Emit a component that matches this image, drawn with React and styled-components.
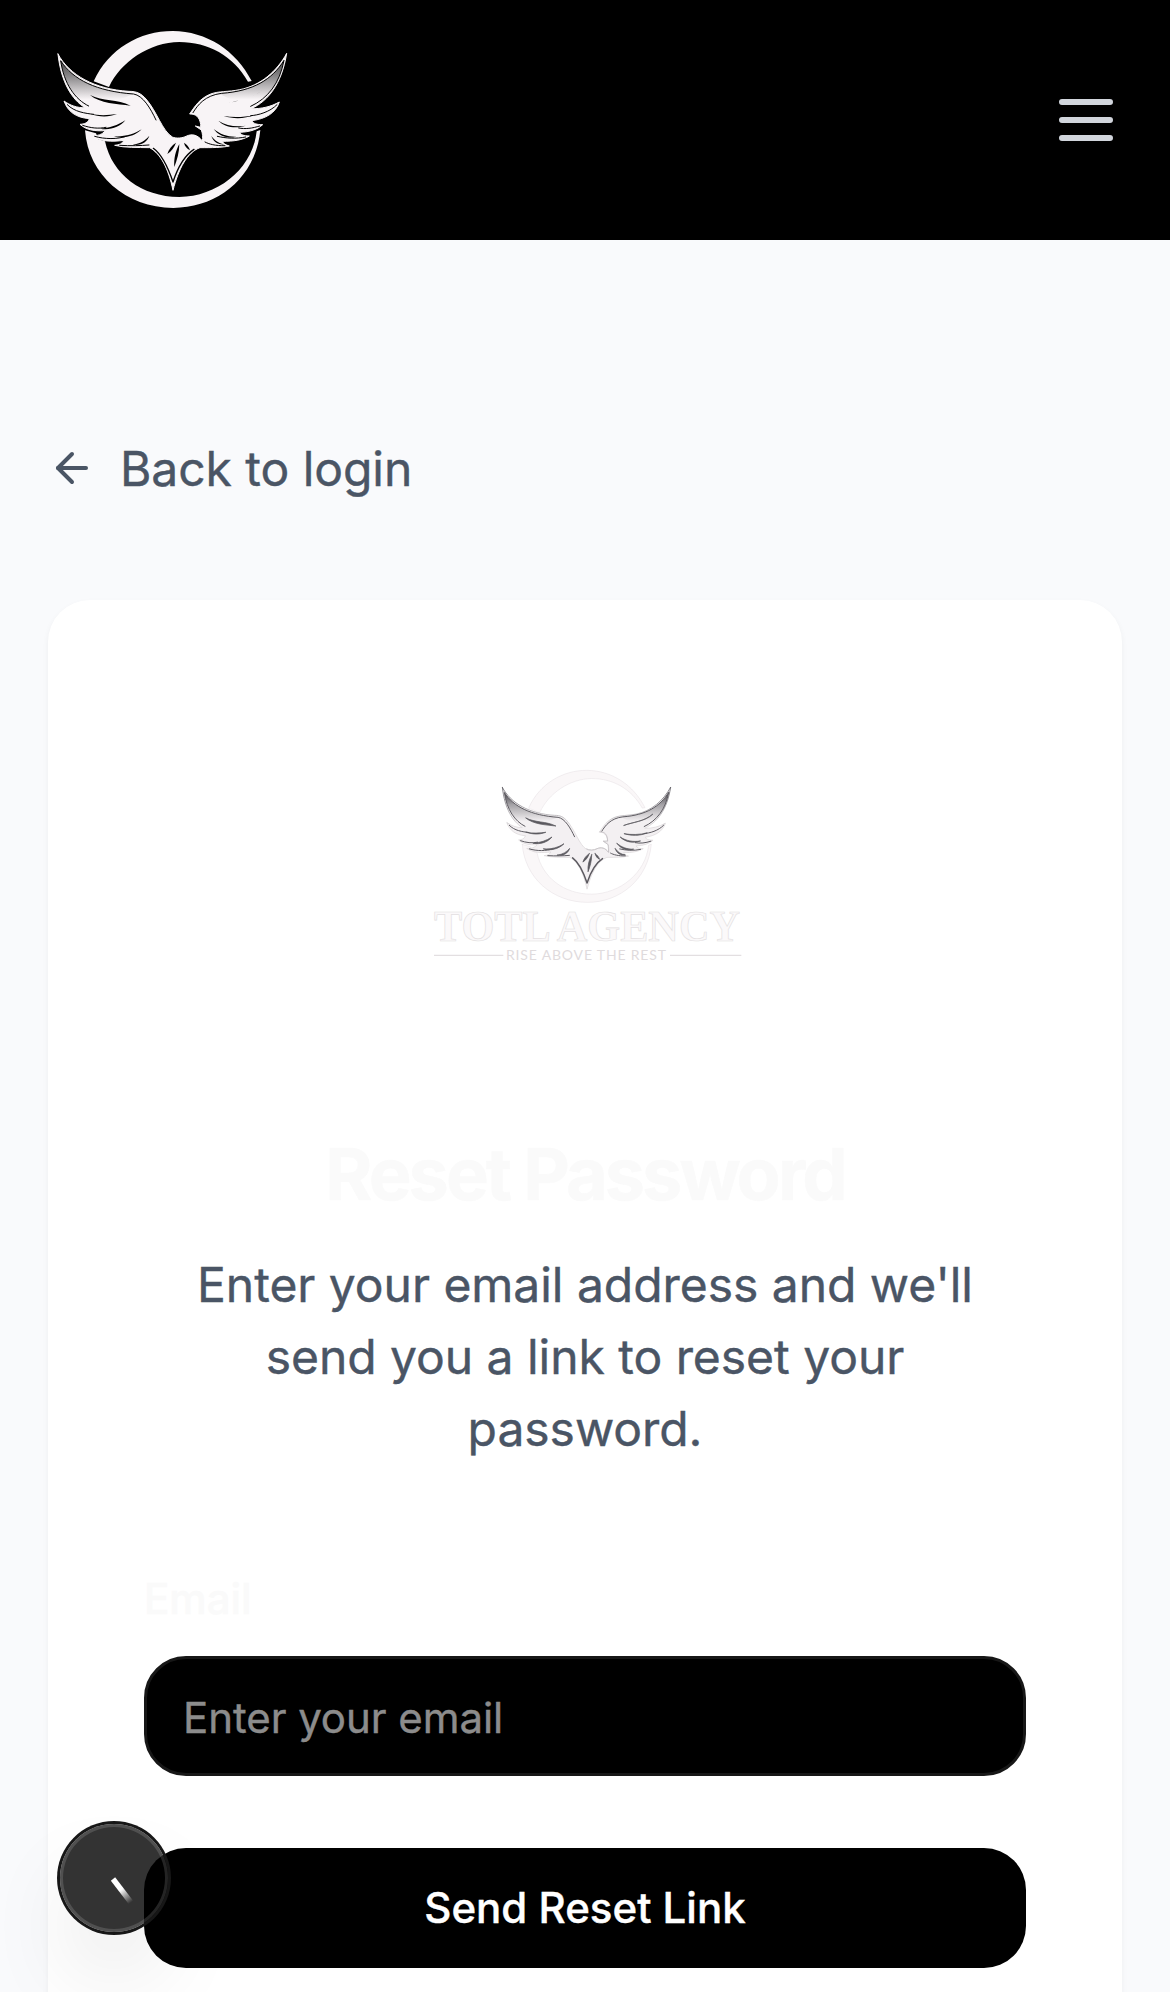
import React from "react";
import styled, { createGlobalStyle } from "styled-components";
import { ArrowLeft } from "lucide-react";

const GlobalStyle = createGlobalStyle`
  *, *::before, *::after { box-sizing: border-box; }
  body {
    margin: 0;
    height: 1992px;
    overflow: hidden;
    background: #f9fafc;
    font-family: Inter, "Liberation Sans", sans-serif;
    -webkit-font-smoothing: antialiased;
    -webkit-text-stroke: 0.4px currentColor;
  }
`;

const Header = styled.header`
  display: flex;
  align-items: center;
  justify-content: space-between;
  height: 240px;
  padding: 0 48px 0 40px;
  background: #000;
`;

const HomeLink = styled.a`
  display: flex;
`;

const MenuButton = styled.button`
  display: flex;
  padding: 0;
  border: 0;
  background: none;
  color: #d1d5dc;
`;

const Main = styled.main`
  padding: 192px 48px 0;
`;

const BackLink = styled.a`
  display: inline-flex;
  align-items: center;
  gap: 24px;
  height: 72px;
  margin-bottom: 96px;
  color: #4a5565;
  font-size: 48px;
  line-height: 72px;
  letter-spacing: -0.06px;
`;

const BackText = styled.span`
  padding-top: 2px;
`;

const Card = styled.section`
  display: flex;
  flex-direction: column;
  padding: 140px 96px 96px;
  border-radius: 42px;
  background: #fff;
  box-shadow: 0 3px 6px rgba(0, 0, 0, 0.05);
`;

const Brand = styled.div`
  display: flex;
  justify-content: center;
  margin-bottom: 158px;
`;

const Title = styled.h1`
  margin: 0 0 39px;
  color: #fafafa;
  font-size: 72px;
  font-weight: 700;
  line-height: 72px;
  letter-spacing: -3px;
  text-align: center;
  -webkit-text-stroke-width: 0.6px;
`;

const Description = styled.p`
  margin: 0 0 113px;
  padding: 0 48px;
  color: #4a5565;
  font-size: 48px;
  line-height: 72px;
  letter-spacing: -0.04px;
  text-align: center;
`;

const Form = styled.form`
  display: flex;
  flex-direction: column;
`;

const Label = styled.label`
  margin-bottom: 36px;
  color: #fafafa;
  font-size: 42px;
  font-weight: 500;
  line-height: 42px;
`;

const Input = styled.input`
  height: 120px;
  margin-bottom: 72px;
  padding: 2px 36px 0;
  border: 3px solid #171717;
  border-radius: 42px;
  background: #000;
  color: #fafafa;
  font: inherit;
  font-size: 42px;
  letter-spacing: -0.06px;
  &::placeholder {
    color: #8c8c8c;
    opacity: 1;
  }
`;

const Submit = styled.button`
  height: 120px;
  padding: 0 0 2px;
  border: 0;
  border-radius: 42px;
  background: #000;
  color: #fff;
  font: inherit;
  font-size: 42px;
  font-weight: 500;
`;

const DevBadge = styled.div`
  position: fixed;
  left: 60px;
  top: 1824px;
  width: 108px;
  height: 108px;
  border-radius: 50%;
  background: rgba(0, 0, 0, 0.8);
  box-shadow:
    0 0 0 3px #171717,
    inset 0 0 0 3px rgba(255, 255, 255, 0.14),
    0 48px 96px -24px rgba(0, 0, 0, 0.24);
`;

const ON_DARK = {
  ink: "#000",
  fill: "#f8f4f6",
  ring: "#f8f4f6",
  ringEdge: "none",
  tip: "#4a494a",
  mid: "#8b898b",
  rim: 3,
};
const ON_LIGHT = {
  ink: "#5b595f",
  fill: "#f3f0f2",
  ring: "#faf7f8",
  ringEdge: "#e4dfe2",
  tip: "#4c4a50",
  mid: "#a3a1a5",
  rim: 4,
};

function Eagle({ id, tone }) {
  const light = tone === ON_LIGHT;
  return (
    <g strokeLinejoin="round" strokeLinecap="round">
      <defs>
        <linearGradient id={id} gradientUnits="userSpaceOnUse" x1="0" y1="155" x2="0" y2="268">
          <stop offset="0" stopColor={tone.tip} />
          <stop offset="0.4" stopColor={tone.mid} />
          <stop offset="1" stopColor={tone.fill} />
        </linearGradient>
        <linearGradient id={`${id}-edge`} gradientUnits="userSpaceOnUse" x1="0" y1="130" x2="0" y2="290">
          <stop offset="0" stopColor={light ? "#55535a" : tone.fill} />
          <stop offset="0.5" stopColor={light ? "#8a888d" : tone.fill} />
          <stop offset="1" stopColor={light ? "#dcd8da" : tone.fill} />
        </linearGradient>
      </defs>
      <path
        fill={tone.ring}
        stroke={tone.ringEdge}
        strokeWidth="2"
        d="M161 214C206 116 299 63 398 63C500 64 588 121 635 213L624 215C580 137 504 96 418 96C329 97 242 155 207 231Z"
      />
      <path
        fill={tone.ring}
        stroke={tone.ringEdge}
        strokeWidth="2"
        d="M135 361L168 370L175 388L195 394C216 493 304 561 418 561C535 559 638 475 650 364L661 360C648 501 534 594 400 594C257 593 145 495 135 361Z"
      />
      {/* silhouette */}
      <path
        fill={tone.fill}
        stroke={`url(#${id}-edge)`}
        strokeWidth="3"
        d="M54 132C63 218 97 270 135 293C112 294 90 286 72 273C83 304 107 323 148 326C144 339 133 342 120 343C139 360 163 364 196 362C187 374 172 378 153 377C182 395 215 396 252 391C247 401 238 405 224 406C256 414 292 412 329 413C362 431 385 475 399 541C415 478 441 427 480 413C516 413 545 413 568 408C557 405 550 401 547 394C583 394 607 390 628 378C611 378 602 374 599 367C630 366 653 358 668 344C650 344 640 341 636 332C678 326 707 309 718 276C693 290 664 297 634 296C684 273 725 223 740 130C711 184 661 227 599 239C565 246 535 243 512 252C480 265 465 288 449 312C468 311 479 322 482 343L482 352L466 348L484 360C488 371 489 383 487 393C473 374 456 371 440 378C427 385 408 386 397 381C366 362 352 306 318 267C303 250 290 244 267 244C165 238 88 196 54 132Z"
      />
      {/* shaded wing tips */}
      <path
        fill={`url(#${id})`}
        d="M62 152C99 209 169 244 281 252C255 262 218 280 148 286C105 268 72 222 62 152ZM732 151C696 209 640 243 535 250C570 268 608 285 636 289C684 265 719 220 732 151Z"
      />
      <g fill="none" stroke={tone.ink} strokeWidth={tone.rim}>
        <path d="M146 288C105 268 72 222 62 152C99 209 169 244 281 252C309 257 331 294 348 330" />
        <path d="M632 289C684 265 719 220 732 151C696 209 640 243 545 250C495 256 473 285 459 308" />
        <path d="M82 284C103 306 136 310 161 313M128 346C151 354 174 357 198 352M164 379C194 388 233 388 258 379M239 406C272 408 302 407 327 405" />
        <path d="M711 284C690 306 654 316 632 317M659 348C637 355 616 358 596 354M617 381C588 387 558 385 532 379M555 407C526 408 506 402 495 396" />
        <path d="M340 415C369 436 385 475 399 516C413 473 434 436 462 418" strokeWidth={light ? 6 : 4} />
      </g>
      {/* feather cuts */}
      <g fill={tone.ink} stroke={tone.ink} strokeWidth={light ? 3 : 0}>
        <path d="M150 255C188 274 232 267 272 287C231 282 181 281 150 255ZM151 312C178 317 206 316 231 312C206 322 177 321 151 312ZM180 356C209 354 233 346 256 331C240 351 208 363 180 356ZM222 379C253 381 282 373 305 358C287 377 250 389 222 379ZM278 404C301 401 316 391 328 377C322 396 303 408 278 404Z" />
        <path d="M666 240C634 269 586 271 548 285C587 270 632 270 666 240ZM551 318C580 323 612 322 644 315C613 327 580 327 551 318ZM535 332C559 347 587 352 617 347C586 357 555 352 535 332ZM521 357C541 373 563 381 589 380C558 388 535 376 521 357ZM514 378C525 393 538 401 555 403C533 406 519 394 514 378Z" />
        <path d="M408 398C395 406 386 419 382 432C395 423 403 412 408 398ZM418 402C407 422 401 446 403 471C411 450 418 427 418 402ZM432 398C434 409 441 416 450 421C447 411 441 404 432 398Z" />
      </g>
      {light && (
        <path
          fill="none"
          stroke="#bdb8bc"
          strokeWidth="3"
          d="M452 310C474 310 482 324 483 347L465 348L485 362L487 393C473 374 456 371 440 378C427 385 408 386 397 379"
        />
      )}
    </g>
  );
}

function HeaderLogo() {
  return (
    <svg width="270" height="220" viewBox="0 0 810 660" aria-label="TOTL Agency">
      <Eagle id="wing-dark" tone={ON_DARK} />
    </svg>
  );
}

const LogoSvg = styled.svg`
  overflow: visible;
`;

const Wordmark = styled.text`
  fill: #fbf9fa;
  stroke: #e3dfe1;
  stroke-width: 2px;
  font-family: "Liberation Serif", serif;
  font-size: 136px;
  font-weight: 700;
`;

const Tagline = styled.text`
  fill: #dfdbdd;
  stroke: none;
  font-family: Lato, sans-serif;
  font-size: 42px;
`;

function CardLogo() {
  return (
    <LogoSvg width="350" height="240" viewBox="0 0 1050 720">
      <g transform="translate(237.5 44) scale(0.736 0.746)">
        <Eagle id="wing-light" tone={ON_LIGHT} />
      </g>
      <Wordmark x="72" y="603" textLength="918" lengthAdjust="spacingAndGlyphs">
        TOTL AGENCY
      </Wordmark>
      <path d="M72 646H280M780 646H994" stroke="#e3dfe1" strokeWidth="4" />
      <Tagline x="288" y="660" textLength="480" lengthAdjust="spacing">
        RISE ABOVE THE REST
      </Tagline>
    </LogoSvg>
  );
}

function MenuIcon() {
  return (
    <svg width="72" height="72" viewBox="0 0 24 24" fill="none" stroke="currentColor" strokeWidth="2" strokeLinecap="round">
      <path d="M4 6h16M4 12h16M4 18h16" />
    </svg>
  );
}

function BadgeMark() {
  return (
    <svg width="108" height="108" viewBox="0 0 108 108">
      <defs>
        <linearGradient id="stroke-fade" gradientUnits="userSpaceOnUse" x1="53" y1="55" x2="71" y2="78.5">
          <stop offset="0.45" stopColor="#fff" />
          <stop offset="1" stopColor="#fff" stopOpacity="0" />
        </linearGradient>
      </defs>
      <path d="M53 55L71 78.5" stroke="url(#stroke-fade)" strokeWidth="5.4" />
    </svg>
  );
}

export default function App() {
  return (
    <>
      <GlobalStyle />
      <Header>
        <HomeLink>
          <HeaderLogo />
        </HomeLink>
        <MenuButton aria-label="Open menu">
          <MenuIcon />
        </MenuButton>
      </Header>
      <Main>
        <BackLink>
          <ArrowLeft size={48} />
          <BackText>Back to login</BackText>
        </BackLink>
        <Card>
          <Brand>
            <CardLogo />
          </Brand>
          <Title>Reset Password</Title>
          <Description>Enter your email address and we'll send you a link to reset your password.</Description>
          <Form>
            <Label htmlFor="email">Email</Label>
            <Input id="email" type="email" placeholder="Enter your email" />
            <Submit type="button">Send Reset Link</Submit>
          </Form>
        </Card>
      </Main>
      <DevBadge>
        <BadgeMark />
      </DevBadge>
    </>
  );
}
